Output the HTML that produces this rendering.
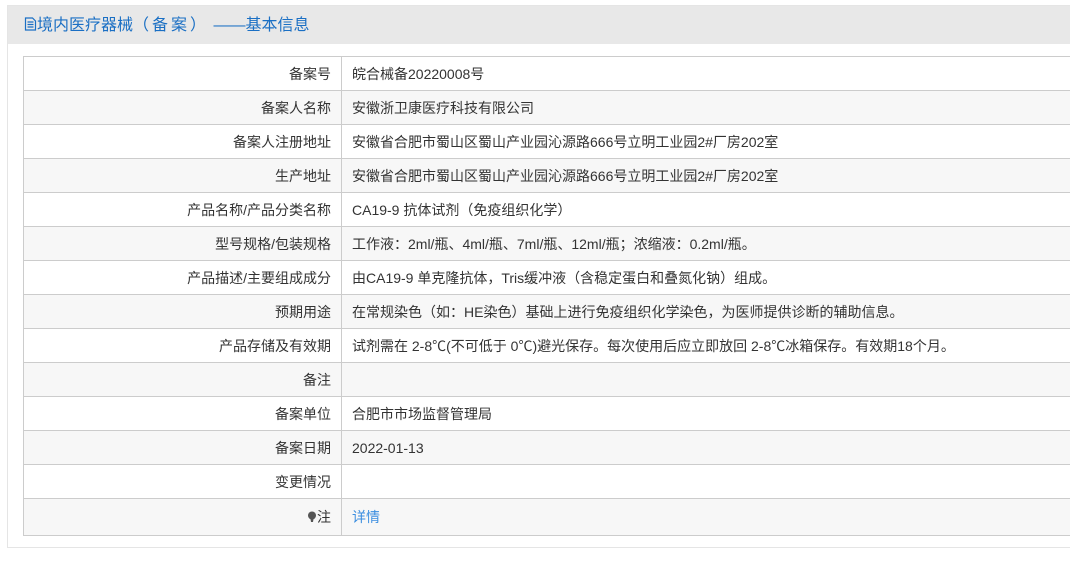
<!DOCTYPE html>
<html><head><meta charset="utf-8"><style>
body{margin:0;background:#fff;font-family:"Liberation Sans","Noto Sans CJK SC",sans-serif;}
.panel{position:absolute;left:7px;top:5px;width:1070px;height:543px;border:1px solid #e5e5e5;box-sizing:border-box;}
.hd{height:38px;background:#e8e8e8;color:#1a6fc4;font-size:16px;line-height:40px;padding-left:16px;}
table{position:absolute;left:15px;top:50px;width:1060px;border-collapse:collapse;font-size:14px;color:#333;}
td{border:1px solid #ccc;height:33px;padding:0;}
td.l{width:307px;text-align:right;padding-right:10px;}
td.v{padding-left:10px;}
tr:nth-child(even){background:#f7f7f7;}
a{color:#3b8ee0;text-decoration:none;}
</style></head><body>
<div class="panel"><div class="hd"><svg width="13" height="14" viewBox="0 0 13 14" style="vertical-align:-1px"><path d="M1.5 1h7l3 3v9h-10z M3.5 5h6 M3.5 7.5h6 M3.5 10h6" fill="none" stroke="#1a6fc4" stroke-width="1.2"/></svg>境内医疗器械<span style="letter-spacing:3px">（备案）</span> ——基本信息</div>
<table>
<tr><td class="l">备案号</td><td class="v">皖合械备20220008号</td></tr>
<tr><td class="l">备案人名称</td><td class="v">安徽浙卫康医疗科技有限公司</td></tr>
<tr><td class="l">备案人注册地址</td><td class="v">安徽省合肥市蜀山区蜀山产业园沁源路666号立明工业园2#厂房202室</td></tr>
<tr><td class="l">生产地址</td><td class="v">安徽省合肥市蜀山区蜀山产业园沁源路666号立明工业园2#厂房202室</td></tr>
<tr><td class="l">产品名称/产品分类名称</td><td class="v">CA19-9 抗体试剂（免疫组织化学）</td></tr>
<tr><td class="l">型号规格/包装规格</td><td class="v">工作液：2ml/瓶、4ml/瓶、7ml/瓶、12ml/瓶；浓缩液：0.2ml/瓶。</td></tr>
<tr><td class="l">产品描述/主要组成成分</td><td class="v">由CA19-9 单克隆抗体，Tris缓冲液（含稳定蛋白和叠氮化钠）组成。</td></tr>
<tr><td class="l">预期用途</td><td class="v">在常规染色（如：HE染色）基础上进行免疫组织化学染色，为医师提供诊断的辅助信息。</td></tr>
<tr><td class="l">产品存储及有效期</td><td class="v">试剂需在 2-8℃(不可低于 0℃)避光保存。每次使用后应立即放回 2-8℃冰箱保存。有效期18个月。</td></tr>
<tr><td class="l">备注</td><td class="v"></td></tr>
<tr><td class="l">备案单位</td><td class="v">合肥市市场监督管理局</td></tr>
<tr><td class="l">备案日期</td><td class="v">2022-01-13</td></tr>
<tr><td class="l">变更情况</td><td class="v"></td></tr>
<tr><td class="l" style="height:36px"><svg width="10" height="12" viewBox="0 0 10 12" style="vertical-align:-1px"><circle cx="5" cy="4.5" r="4" fill="#555"/><path d="M3.5 8h3l-.5 3h-2z" fill="#555"/></svg>注</td><td class="v"><a>详情</a></td></tr>
</table></div>
</body></html>
